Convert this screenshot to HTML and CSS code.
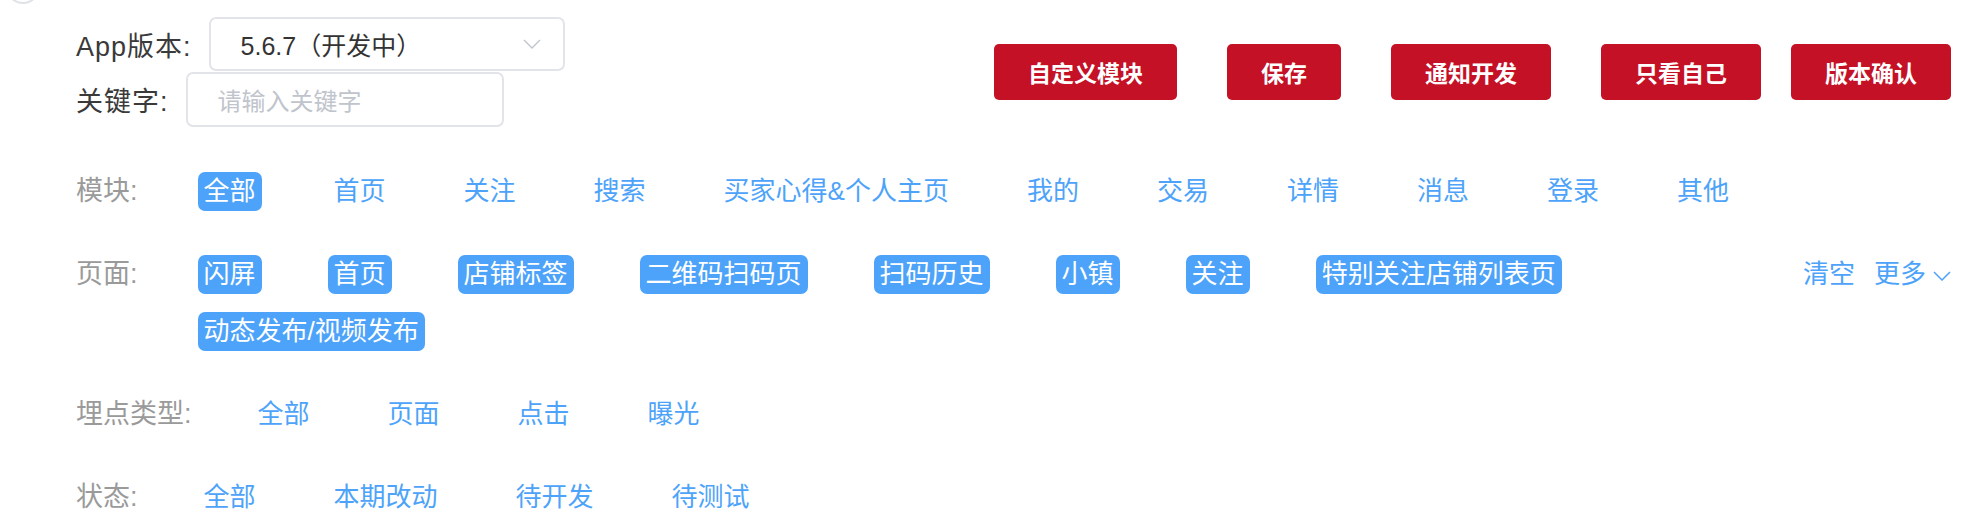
FILE: index.html
```html
<!DOCTYPE html>
<html lang="zh-CN">
<head>
<meta charset="utf-8">
<title>埋点管理</title>
<link rel="stylesheet" href="styles.css">
</head>
<body>
<div class="page">
  <div class="corner-dot"></div>
  <div class="header">
    <div class="form">
      <div class="form-row">
        <span class="form-label">App版本:</span>
        <div class="select">
          <span class="select-value">5.6.7（开发中）</span>
          <svg class="select-arrow" width="18" height="10" viewBox="0 0 18 10"><path d="M1 1 L9 9 L17 1" fill="none" stroke="#c0c4cc" stroke-width="1.3"/></svg>
        </div>
      </div>
      <div class="form-row">
        <span class="form-label">关键字:</span>
        <div class="input"><span class="placeholder">请输入关键字</span></div>
      </div>
    </div>
    <div class="buttons">
      <button class="btn">自定义模块</button>
      <button class="btn">保存</button>
      <button class="btn">通知开发</button>
      <button class="btn">只看自己</button>
      <button class="btn btn-tight">版本确认</button>
    </div>
  </div>

  <div class="filter-row">
    <span class="filter-label">模块:</span>
    <div class="filter-items">
      <span class="item active">全部</span>
      <span class="item">首页</span>
      <span class="item">关注</span>
      <span class="item">搜索</span>
      <span class="item">买家心得&amp;个人主页</span>
      <span class="item">我的</span>
      <span class="item">交易</span>
      <span class="item">详情</span>
      <span class="item">消息</span>
      <span class="item">登录</span>
      <span class="item">其他</span>
    </div>
  </div>

  <div class="filter-row">
    <span class="filter-label">页面:</span>
    <div class="filter-items">
      <span class="item active">闪屏</span>
      <span class="item active">首页</span>
      <span class="item active">店铺标签</span>
      <span class="item active">二维码扫码页</span>
      <span class="item active">扫码历史</span>
      <span class="item active">小镇</span>
      <span class="item active">关注</span>
      <span class="item active">特别关注店铺列表页</span>
      <span class="item active">动态发布/视频发布</span>
    </div>
    <div class="filter-actions">
      <span class="action">清空</span>
      <span class="action">更多<svg class="more-arrow" width="18" height="10" viewBox="0 0 18 10"><path d="M1 1 L9 9 L17 1" fill="none" stroke="#4da3fa" stroke-width="1.5"/></svg></span>
    </div>
  </div>

  <div class="filter-row">
    <span class="filter-label">埋点类型:</span>
    <div class="filter-items">
      <span class="item">全部</span>
      <span class="item">页面</span>
      <span class="item">点击</span>
      <span class="item">曝光</span>
    </div>
  </div>

  <div class="filter-row">
    <span class="filter-label">状态:</span>
    <div class="filter-items">
      <span class="item">全部</span>
      <span class="item">本期改动</span>
      <span class="item">待开发</span>
      <span class="item">待测试</span>
    </div>
  </div>
</div>
</body>
</html>
```

FILE: styles.css
```css
* { box-sizing: border-box; }

html, body {
  margin: 0;
  background: #ffffff;
}

body {
  font-family: "Liberation Sans", "Noto Sans CJK SC", sans-serif;
  color: #333333;
  overflow: hidden;
}

.page {
  position: relative;
  padding: 17px 33px 0 76px;
}

.corner-dot {
  position: absolute;
  left: 6px;
  top: -30px;
  width: 34px;
  height: 34px;
  border-radius: 50%;
  border: 2px solid #dfe2e7;
}

/* header */
.header {
  display: flex;
  justify-content: space-between;
  align-items: center;
}

.form {
  display: flex;
  flex-direction: column;
  gap: 1px;
}

.form-row {
  display: flex;
  align-items: center;
}

.form-label {
  font-size: 27px;
  color: #3a3a3a;
  margin-right: 17px;
  letter-spacing: 1px;
}

.select {
  width: 356px;
  height: 54px;
  border: 2px solid #e2e4e9;
  border-radius: 7px;
  display: flex;
  align-items: center;
  justify-content: space-between;
  padding: 0 22px 0 30px;
}

.select-value {
  font-size: 25px;
  color: #333333;
}

.select-arrow {
  display: block;
}

.input {
  width: 318px;
  height: 55px;
  border: 2px solid #e2e4e9;
  border-radius: 7px;
  display: flex;
  align-items: center;
  padding-left: 30px;
}

.placeholder {
  font-size: 24px;
  color: #c0c4cc;
}

.buttons {
  display: flex;
  gap: 50px;
}

.btn {
  height: 56px;
  padding: 0 34px;
  border: none;
  border-radius: 5px;
  background: #c41126;
  color: #ffffff;
  font-family: "Noto Sans CJK SC", sans-serif;
  font-size: 23px;
  font-weight: 700;
}

.btn-tight {
  margin-left: -20px;
}

/* filters */
.filter-row {
  display: flex;
  align-items: flex-start;
  margin-top: 44px;
}

.header + .filter-row {
  margin-top: 45px;
}

.filter-label {
  font-size: 27px;
  line-height: 39px;
  color: #9a9a9a;
  margin-right: 60px;
  white-space: nowrap;
}

.filter-items {
  flex: 1;
  display: flex;
  flex-wrap: wrap;
  column-gap: 66px;
  row-gap: 18px;
  padding-right: 60px;
}

.item {
  font-size: 26px;
  line-height: 39px;
  padding: 0 6px;
  border-radius: 7px;
  color: #4da3fa;
  white-space: nowrap;
}

.item.active {
  background: #4da3fa;
  color: #ffffff;
}

.filter-actions {
  display: flex;
  gap: 19px;
  line-height: 39px;
}

.action {
  font-size: 26px;
  color: #4da3fa;
  display: flex;
  align-items: center;
}

.more-arrow {
  margin-left: 7px;
  margin-top: 2px;
}
```
